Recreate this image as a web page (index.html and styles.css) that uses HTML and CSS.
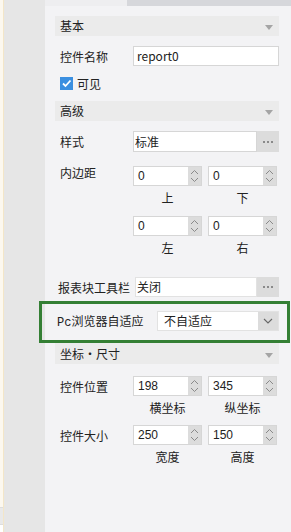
FILE: index.html
```html
<!DOCTYPE html>
<html lang="zh-CN">
<head>
    <meta charset="UTF-8">
    <meta name="viewport" content="width=device-width, initial-scale=1.0">
    <title>属性面板</title>
    <link rel="stylesheet" href="styles.css">
</head>
<body>

    <div class="edge">
        <div class="edge-tab"></div>
    </div>
    <div class="rail"></div>

    <div class="panel">
        <div class="tabbar">
            <div class="tab-left"></div>
            <div class="tab-right"></div>
        </div>

        <!-- 基本 -->
        <div class="section-title">基本<span class="arrow"></span></div>
        <div class="row row-name">
            <label class="label">控件名称</label>
            <div class="field">report0</div>
        </div>
        <div class="row row-check">
            <span class="checkbox">
                <svg width="13" height="13" viewBox="0 0 13 13"><path d="M3 6.5 L5.5 9 L10.5 3.5" fill="none" stroke="#fff" stroke-width="1.8"/></svg>
            </span>
            <span>可见</span>
        </div>

        <!-- 高级 -->
        <div class="section-title title-adv">高级<span class="arrow"></span></div>
        <div class="row row-style">
            <label class="label">样式</label>
            <div class="combo">
                <div class="field field-flat">标准</div>
                <div class="more"></div>
            </div>
        </div>

        <div class="row row-spin row-pad1">
            <label class="label">内边距</label>
            <div class="spin-pair">
                <div class="spin"><span class="spin-val">0</span><span class="stepper"></span></div>
                <div class="spin"><span class="spin-val">0</span><span class="stepper"></span></div>
            </div>
        </div>
        <div class="captions">
            <span>上</span><span>下</span>
        </div>
        <div class="row row-spin row-pad2">
            <label class="label"></label>
            <div class="spin-pair">
                <div class="spin"><span class="spin-val">0</span><span class="stepper"></span></div>
                <div class="spin"><span class="spin-val">0</span><span class="stepper"></span></div>
            </div>
        </div>
        <div class="captions">
            <span>左</span><span>右</span>
        </div>

        <div class="row row-toolbar">
            <label class="label label-wide">报表块工具栏</label>
            <div class="combo">
                <div class="field field-flat">关闭</div>
                <div class="more"></div>
            </div>
        </div>

        <div class="highlight">
            <label class="label-pc"><span class="latin">Pc</span>浏览器自适应</label>
            <div class="select">
                <span class="select-val">不自适应</span>
                <span class="select-btn">
                    <svg width="10" height="6" viewBox="0 0 10 6"><path d="M1 1 L5 5 L9 1" fill="none" stroke="#666" stroke-width="1.1"/></svg>
                </span>
            </div>
        </div>

        <!-- 坐标·尺寸 -->
        <div class="section-title title-pos">坐标・尺寸<span class="arrow"></span></div>
        <div class="row row-spin row-pos">
            <label class="label">控件位置</label>
            <div class="spin-pair">
                <div class="spin"><span class="spin-val">198</span><span class="stepper"></span></div>
                <div class="spin"><span class="spin-val">345</span><span class="stepper"></span></div>
            </div>
        </div>
        <div class="captions">
            <span>横坐标</span><span>纵坐标</span>
        </div>
        <div class="row row-spin row-size">
            <label class="label">控件大小</label>
            <div class="spin-pair">
                <div class="spin"><span class="spin-val">250</span><span class="stepper"></span></div>
                <div class="spin"><span class="spin-val">150</span><span class="stepper"></span></div>
            </div>
        </div>
        <div class="captions">
            <span>宽度</span><span>高度</span>
        </div>
    </div>

    <script>
        // 给每个数字框加上上下箭头
        var arrows = '<svg width="9" height="16" viewBox="0 0 9 16">' +
            '<path d="M1 6 L4.5 2.5 L8 6" fill="none" stroke="#8a8a8a" stroke-width="1"/>' +
            '<path d="M1 10 L4.5 13.5 L8 10" fill="none" stroke="#8a8a8a" stroke-width="1"/></svg>';
        document.querySelectorAll('.stepper').forEach(function (el) {
            el.innerHTML = arrows;
        });

        // “更多”按钮的三个点
        var dots = '<svg width="10" height="2" viewBox="0 0 10 2">' +
            '<rect x="0" y="0" width="2" height="2" fill="#8a8a8a"/>' +
            '<rect x="4" y="0" width="2" height="2" fill="#8a8a8a"/>' +
            '<rect x="8" y="0" width="2" height="2" fill="#8a8a8a"/></svg>';
        document.querySelectorAll('.more').forEach(function (el) {
            el.innerHTML = dots;
        });
    </script>

</body>
</html>
```

FILE: styles.css
```css
body {
    margin: 0;
    padding: 0;
    display: flex;
    height: 532px;
    overflow: hidden;
    font-family: "Noto Sans CJK SC", "Noto Sans", sans-serif;
    font-size: 12px;
    color: #222;
    background-color: #f3f3f5;
}
.edge {
    width: 3px;
    background: linear-gradient(#fcf8ef 0, #fcf8ef 525px, #fff 525px);
    border-right: 1px solid #f3e6c8;
}
.edge-tab {
    margin-top: 507px;
    height: 18px;
    background-color: #e9e9e9;
    border-top: 1px solid #ddd;
    border-bottom: 1px solid #ddd;
    box-sizing: border-box;
}
.rail {
    width: 41px;
    background-color: #e6e6e6;
}
.panel {
    flex: 1;
    background-color: #f3f3f5;
    padding: 0 12px 0 10px;
}
.tabbar {
    display: flex;
    height: 6px;
    margin: 0 -12px 0 -10px;
}
.tab-left {
    width: 82px;
    background-color: #eeeef0;
}
.tab-right {
    flex: 1;
    background-color: #d6d7db;
}
.section-title {
    display: flex;
    align-items: center;
    justify-content: space-between;
    height: 20px;
    margin-top: 10px;
    padding: 0 6px 0 5px;
    background-color: #ebebeb;
    font-size: 12px;
    line-height: 20px;
}
.arrow {
    width: 0;
    height: 0;
    margin-top: 3px;
    border-left: 4px solid transparent;
    border-right: 4px solid transparent;
    border-top: 5px solid #a5a5a5;
}
.row {
    display: flex;
    align-items: center;
}
.label {
    width: 73px;
    padding-left: 5px;
    flex-shrink: 0;
}
.label-wide {
    width: 77px;
    padding-left: 3px;
    white-space: nowrap;
}
.field {
    flex: 1;
    height: 20px;
    line-height: 18px;
    box-sizing: border-box;
    border: 1px solid #d6d6d6;
    background-color: #fff;
    padding-left: 3px;
    font-size: 12px;
}
.row-name {
    margin-top: 10px;
}
.row-check {
    margin-top: 11px;
    height: 13px;
    padding-left: 5px;
    gap: 4px;
}
.checkbox {
    width: 13px;
    height: 13px;
    background-color: #3b8fe0;
    display: flex;
}
.title-adv {
    margin-top: 11px;
}
.combo {
    flex: 1;
    display: flex;
    height: 21px;
}
.field-flat {
    height: 21px;
    line-height: 19px;
    padding-left: 1px;
}
.more {
    width: 22px;
    flex-shrink: 0;
    background-color: #dcdcdc;
    display: flex;
    align-items: center;
    justify-content: center;
}
.row-style {
    margin-top: 10px;
}
.spin-pair {
    display: flex;
    gap: 6px;
}
.spin {
    display: flex;
    width: 69px;
    height: 20px;
    box-sizing: border-box;
    border: 1px solid #d6d6d6;
    background-color: #fff;
}
.spin-val {
    flex: 1;
    padding-left: 4px;
    line-height: 18px;
    font-family: "Liberation Sans", sans-serif;
    font-size: 12px;
}
.stepper {
    width: 13px;
    background-color: #dcdcdc;
    display: flex;
    align-items: center;
    justify-content: center;
}
.row-pad1 {
    margin-top: 14px;
    align-items: flex-start;
}
.row-pad1 .label {
    line-height: 14px;
}
.row-pad2 {
    margin-top: 8px;
}
.captions {
    display: flex;
    gap: 6px;
    padding-left: 78px;
    height: 20px;
    line-height: 20px;
    margin-top: 2px;
}
.captions span {
    width: 69px;
    text-align: center;
    font-size: 12px;
}
.row-toolbar {
    margin-top: 19px;
}
.row-toolbar .combo {
    height: 20px;
}
.row-toolbar .field-flat {
    height: 20px;
    line-height: 18px;
    border-color: #e2e2e2;
}
.highlight {
    display: flex;
    align-items: center;
    margin: 4px -11px 0 -16px;
    height: 42px;
    box-sizing: border-box;
    border: 3px solid #347f34;
    padding: 0 8px 2px 15px;
}
.label-pc {
    width: 100px;
    flex-shrink: 0;
    font-size: 12px;
}
.latin {
    font-family: "Liberation Mono", monospace;
}
.select {
    flex: 1;
    display: flex;
    height: 20px;
    background-color: #fff;
    border: 1px solid #e2e2e2;
    box-sizing: border-box;
}
.select-val {
    flex: 1;
    padding-left: 6px;
    line-height: 18px;
    font-size: 12px;
}
.select-btn {
    width: 20px;
    background-color: #dcdcdc;
    display: flex;
    align-items: center;
    justify-content: center;
}
.title-pos {
    margin-top: 0;
    height: 21px;
}
.row-pos {
    margin-top: 12px;
}
.row-size {
    margin-top: 7px;
}
```
